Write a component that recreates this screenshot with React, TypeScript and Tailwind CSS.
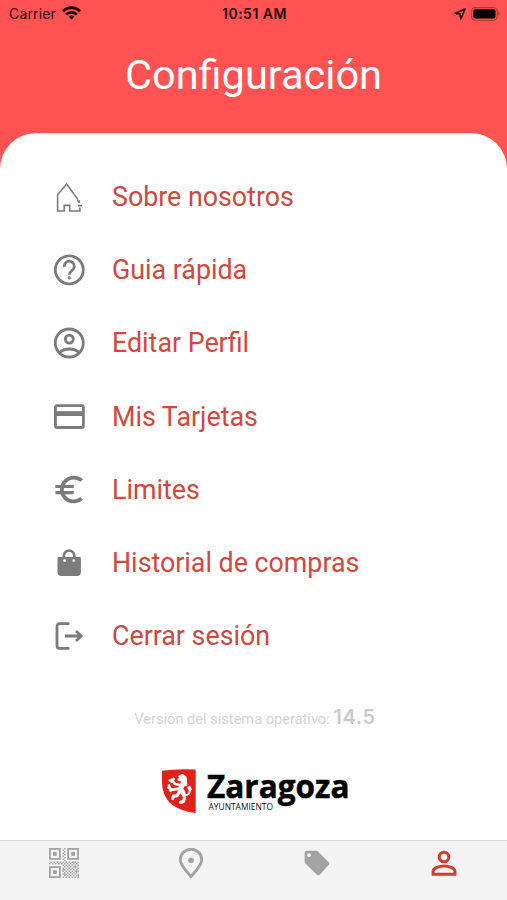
import type { ReactNode } from "react";

const GRAY = "#7b7b7b";
const RED = "#d8392f";

function MenuIcon({ children }: { children: ReactNode }) {
  return (
    <svg className="h-9 w-9 shrink-0" viewBox="0 0 36 36" fill="none" stroke={GRAY} strokeWidth={2.8}>
      {children}
    </svg>
  );
}

const items: { label: string; icon: ReactNode }[] = [
  {
    label: "Sobre nosotros",
    icon: (
      <path
        strokeWidth={1.6}
        d="M27 20.6 L15.6 5.1 L6.6 15.8 V32 H13.2 V26.4 H18.7 V32 H28.9 V28.4 M26 22 h3.2 M28 22 v2 M27 26.6 h4"
      />
    ),
  },
  {
    label: "Guia rápida",
    icon: (
      <>
        <circle cx="18.3" cy="17.8" r="14" />
        <path strokeWidth={2.7} d="M13.3 14.8 a5 5 0 1 1 9.1 2.2 c-1.5 2.1 -4.1 2.6 -4.1 5.8" />
        <circle cx="18.3" cy="25.8" r="1.6" fill={GRAY} stroke="none" />
      </>
    ),
  },
  {
    label: "Editar Perfil",
    icon: (
      <>
        <circle cx="18.3" cy="18" r="14" />
        <circle cx="18.3" cy="14.1" r="4" />
        <path d="M8.6 27.6 C13.5 22.8 23.1 22.8 28 27.6" />
      </>
    ),
  },
  {
    label: "Mis Tarjetas",
    icon: (
      <>
        <rect x="4.4" y="6.7" width="28" height="21.8" rx="1.8" />
        <path strokeWidth={4.8} d="M4.4 14.6 h28" />
      </>
    ),
  },
  {
    label: "Limites",
    icon: (
      <path
        fill={GRAY}
        stroke="none"
        transform="translate(-0.2 -0.8) scale(1.53)"
        d="M15 18.5c-2.51 0-4.68-1.42-5.76-3.5H15v-2H8.58c-.05-.33-.08-.66-.08-1s.03-.67.08-1H15V9H9.24C10.32 6.92 12.5 5.5 15 5.5c1.61 0 3.09.59 4.23 1.57L21 5.3C19.41 3.87 17.3 3 15 3c-3.92 0-7.24 2.51-8.48 6H3v2h3.06c-.04.33-.06.66-.06 1s.02.67.06 1H3v2h3.52c1.24 3.49 4.56 6 8.48 6 2.31 0 4.41-.87 6-2.3l-1.78-1.77c-1.13.98-2.6 1.57-4.22 1.57z"
      />
    ),
  },
  {
    label: "Historial de compras",
    icon: (
      <>
        <path d="M12.9 13 V10.8 a5.2 5.2 0 0 1 10.4 0 V13" />
        <path
          fill={GRAY}
          stroke="none"
          d="M7.8 12 H28.6 a1.3 1.3 0 0 1 1.3 1.3 V27 a4 4 0 0 1 -4 4 H10.5 a4 4 0 0 1 -4 -4 V13.3 a1.3 1.3 0 0 1 1.3 -1.3z"
        />
        <circle cx="13.6" cy="15.6" r="1.4" fill="#fff" stroke="none" />
        <circle cx="22.8" cy="15.6" r="1.4" fill="#fff" stroke="none" />
      </>
    ),
  },
  {
    label: "Cerrar sesión",
    icon: (
      <>
        <path d="M18.4 5.7 H8.6 a2.6 2.6 0 0 0 -2.6 2.6 V27.8 a2.6 2.6 0 0 0 2.6 2.6 H18.4" />
        <path d="M14 18 H30 M25 13 L30.2 18 L25 23" />
      </>
    ),
  },
];

function Finder({ x, y }: { x: number; y: number }) {
  return (
    <g>
      <rect x={x + 0.9} y={y + 0.9} width="10" height="10" fill="none" stroke="#a3a3a3" strokeWidth="1.8" />
      <rect x={x + 4} y={y + 4} width="3.8" height="3.8" fill="#a3a3a3" />
    </g>
  );
}

function QrIcon() {
  const dots: ReactNode[] = [];
  for (let r = 0; r < 20; r++) {
    for (let c = 0; c < 20; c++) {
      const between = c >= 9 && c <= 10 && r < 9;
      const band = r >= 9 && r <= 10;
      const quarter = r > 10 && c > 8;
      if ((between || band || quarter) && ((r + c) % 2 === 0 || (r * 7 + c * 5) % 13 === 0)) {
        dots.push(<rect key={`${r}-${c}`} x={c * 1.5} y={r * 1.5} width="1.5" height="1.5" fill="#a8a8a8" />);
      }
    }
  }
  return (
    <svg className="h-[30px] w-[30px]" viewBox="0 0 30 30">
      {dots}
      <Finder x={0} y={0} />
      <Finder x={18.2} y={0} />
      <Finder x={0} y={18.2} />
    </svg>
  );
}

function StatusBar() {
  return (
    <div className="grid h-7 grid-cols-3 items-center pb-px pl-[9px] pr-[7px] font-[Inter,sans-serif] text-[14px] text-[#280808]">
      <div className="flex items-center gap-[6px]">
        <span className="tracking-[0.15px]">Carrier</span>
        <svg className="mb-px h-[14px] w-[19px]" viewBox="0 0 19 14" fill="none" stroke="#180404" strokeWidth="2.7">
          <path d="M1 5.2 C5.8 0.5 13.2 0.5 18 5.2" />
          <path d="M4.2 8.5 C7.2 5.6 11.8 5.6 14.8 8.5" />
          <path d="M9.5 13.4 L6.6 10.6 C8.2 9.1 10.8 9.1 12.4 10.6z" fill="#180404" stroke="none" />
        </svg>
      </div>
      <div className="whitespace-nowrap text-center font-semibold tracking-[0.5px]">10:51 AM</div>
      <div className="flex items-center justify-end gap-[5px]">
        <svg className="h-3 w-3" viewBox="0 0 12 12" fill="none" stroke="#280808" strokeWidth="1.6" strokeLinejoin="round">
          <path d="M11 1 L1 5.4 L6 6 L6.8 11z" />
        </svg>
        <svg className="h-[14px] w-[29px]" viewBox="0 0 29 14">
          <rect x="0.6" y="0.6" width="25.6" height="12.6" rx="3.6" fill="none" stroke="#b03636" strokeWidth="1.1" />
          <rect x="2.3" y="2.3" width="22.2" height="9.2" rx="2" fill="#000" />
          <path d="M27.4 4.8 a2.4 2.4 0 0 1 0 4.2z" fill="#b03636" />
        </svg>
      </div>
    </div>
  );
}

function ZaragozaLogo() {
  return (
    <svg className="h-[64px] w-[200px] overflow-visible" viewBox="156 759 200 64">
      <path
        d="M162 770.8 Q178 768.4 195.7 769.6 V813 Q178 811 169.5 802.5 Q162 794 162 783z"
        fill="#e3211b"
      />
      <g fill="none" stroke="#fff" strokeLinecap="round" strokeLinejoin="round">
        <path strokeWidth="5" d="M182.4 778 L183.4 783 L180.5 788.5 L183 793" />
        <path strokeWidth="2.6" d="M179.4 776.6 L182.6 775.2 L185.4 777.4 L186 785 M178.8 779.6 h3" />
        <path strokeWidth="2.6" d="M179.5 785 L174.6 783.8 L171.8 779.8 M173.6 778.8 L171.8 781.6 L169.8 780.4" />
        <path strokeWidth="2.6" d="M179.6 788.6 L172.4 789.6 L168.4 787.6 M170.6 790.8 L169 785.4" />
        <path strokeWidth="3.2" d="M179.6 791 L177.2 795.6 L173.4 796.2 L172.6 798.6" />
        <path strokeWidth="3.2" d="M183 793 L184.6 797.8 L183.4 801.6 L180.4 802.2" />
        <path strokeWidth="1.8" d="M185.4 795.4 L188.8 794 L190 790.6 L187.8 787.6 L189.8 786.8 L191 789.4" />
      </g>
      <text
        x="207"
        y="798.2"
        textLength="142.5"
        lengthAdjust="spacingAndGlyphs"
        fontSize="32.4"
        fill="#050505"
        stroke="#050505"
        strokeWidth="0.5"
        className="font-['Open_Sans',sans-serif] font-bold"
      >
        Zaragoza
      </text>
      <text
        x="208.5"
        y="809.8"
        textLength="64.5"
        lengthAdjust="spacingAndGlyphs"
        fontSize="8.2"
        fill="#111"
        className="font-['Open_Sans',sans-serif] font-medium"
      >
        AYUNTAMIENTO
      </text>
    </svg>
  );
}

function TabBar() {
  return (
    <nav className="grid h-[60px] shrink-0 grid-cols-4 justify-items-center border-t border-[#dadada] bg-[#f4f4f4] pt-[7px]">
      <div className="pl-[2px]">
        <QrIcon />
      </div>
      <svg className="ml-px h-8 w-[26px]" viewBox="0 0 26 32" fill="none" stroke="#a3a3a3" strokeWidth="2.9">
        <path d="M13 28.6 C8.5 23.4 2.3 17 2.3 11.9 a10.7 10.7 0 0 1 21.4 0 C23.7 17 17.5 23.4 13 28.6z" />
        <circle cx="13" cy="12.3" r="2.8" fill="#a3a3a3" stroke="none" />
      </svg>
      <svg className="ml-px h-8 w-[26px]" viewBox="0 0 26 32">
        <path
          fill="#a3a3a3"
          fillRule="evenodd"
          d="M3 2.7 H12 Q13.2 2.7 14 3.5 L24.8 14.2 Q26 15.5 24.8 16.8 L15.8 26.8 Q14.4 28.2 13 26.8 L1.4 15.6 Q.6 14.8 .6 13.6 V5.1 Q.6 2.7 3 2.7z M5 5.2 a1.9 1.9 0 1 0 .01 0z"
        />
      </svg>
      <svg className="h-8 w-[26px]" viewBox="0 0 26 32" fill="none" stroke={RED} strokeWidth="3">
        <circle cx="13" cy="9" r="4.8" />
        <path d="M2.1 26.2 V23.3 C2.1 19.8 8.6 17.9 13 17.9 C17.4 17.9 23.9 19.8 23.9 23.3 V26.2z" />
      </svg>
    </nav>
  );
}

export default function App() {
  return (
    <div className="flex h-[900px] w-[507px] flex-col overflow-hidden bg-[#ff5252] font-[Roboto,sans-serif]">
      <StatusBar />
      <header className="flex h-[104.5px] shrink-0 justify-center pt-[22.5px]">
        <h1 className="whitespace-nowrap text-[41.5px] leading-[48px] text-white">Configuración</h1>
      </header>
      <main className="flex min-h-0 flex-1 flex-col rounded-t-[36px] bg-white pt-[27.5px]">
        <ul>
          {items.map((item) => (
            <li key={item.label} className="flex h-[73.3px] items-center gap-[25px] pl-[51px]">
              <MenuIcon>{item.icon}</MenuIcon>
              <span className="whitespace-nowrap text-[26.8px] leading-8 text-[#d04840]">{item.label}</span>
            </li>
          ))}
        </ul>
        <p className="mt-[32px] whitespace-nowrap pl-[3px] text-center text-[14.6px] leading-6 text-[#d4d4d4]">
          Versión del sistema operativo:{" "}
          <span className="font-[Inter,sans-serif] text-[20px] font-semibold tracking-[0.6px] text-[#cbcbcb]">14.5</span>
        </p>
        <div className="mt-[28px] flex justify-center pl-[5px]">
          <ZaragozaLogo />
        </div>
      </main>
      <TabBar />
    </div>
  );
}
